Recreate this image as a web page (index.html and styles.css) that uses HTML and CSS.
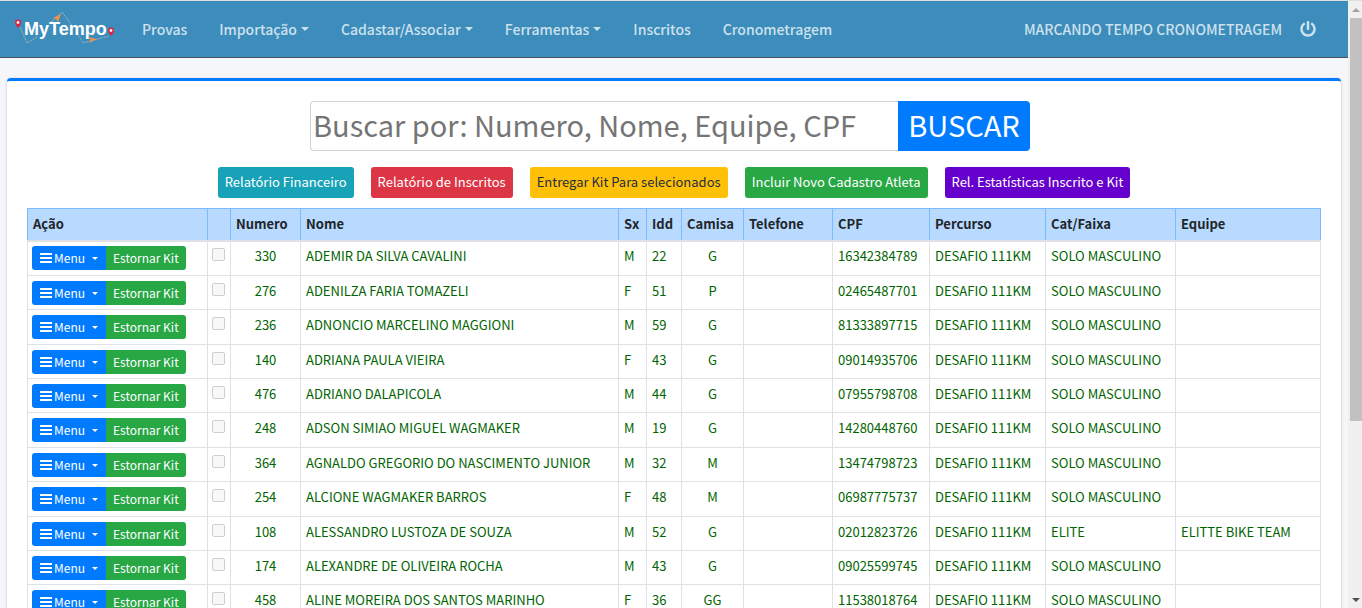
FILE: index.html
```html
<!DOCTYPE html>
<html lang="pt-BR">
<head>
<meta charset="utf-8">
<title>MyTempo - Inscritos</title>
<link rel="stylesheet" href="styles.css">
</head>
<body>
<div class="page">
  <header class="navbar">
    <a class="brand" href="#" aria-label="MyTempo">
      <svg class="logo" viewBox="0 0 100 34" aria-hidden="true">
        <path d="M4 15L11 31L21 25M35 10L46 0L57 15M61 21L67 31L93 24" fill="none" stroke="#a9b4b8" stroke-width="1" stroke-dasharray="2 1"/>
        <path d="M45 2L37 6L40 7L42 10Z M72 25L81 27L73 31L75 28Z" fill="#f0904a"/>
        <text x="8" y="23" class="logo-text">MyTempo</text>
        <path d="M2 16C0 13 -1 12 -1 10.500a3 3 0 0 1 6 0C5 12 4 14 2 16Z M95 24C93 21 92 20 92 18.500a3 3 0 0 1 6 0C98 20 97 22 95 24Z" fill="#e0203c"/>
        <circle cx="2" cy="10.500" r="1.400" fill="#fff"/><circle cx="95" cy="18.500" r="1.400" fill="#fff"/>
      </svg>
    </a>
    <nav class="menu">
      <a href="#">Provas</a>
      <a href="#" class="caret">Importação</a>
      <a href="#" class="caret">Cadastar/Associar</a>
      <a href="#" class="caret">Ferramentas</a>
      <a href="#">Inscritos</a>
      <a href="#">Cronometragem</a>
    </nav>
    <div class="user">
      <a href="#">MARCANDO TEMPO CRONOMETRAGEM</a>
      <a href="#" aria-label="Sair"><svg class="power" viewBox="0 0 512 512" aria-hidden="true"><path fill="currentColor" d="M400 54.100c63 45 104 118.600 104 201.900 0 136.800-110.800 247.700-247.500 248C120 504.300 8.200 393 8 256.400 7.900 173.100 48.900 99.300 111.800 54.200c11.700-8.300 28-4.800 35 7.700L162.600 90c5.900 10.500 3.100 23.800-6.600 31-41.500 30.800-68 79.600-68 134.900-.1 92.300 74.500 168.100 168 168.100 91.600 0 168.600-74.200 168-169.100-.3-51.800-24.700-101.800-68.100-134-9.700-7.200-12.400-20.500-6.500-30.900l15.800-28.100c7-12.400 23.200-16.100 34.800-7.800zM296 264V24c0-13.300-10.700-24-24-24h-32c-13.300 0-24 10.700-24 24v240c0 13.300 10.700 24 24 24h32c13.300 0 24-10.700 24-24z"/></svg></a>
    </div>
  </header>
  <main class="card">
    <form class="search">
      <input type="text" aria-label="Buscar" placeholder="Buscar por: Numero, Nome, Equipe, CPF">
      <button type="button">BUSCAR</button>
    </form>
    <div class="actions">
      <button class="btn teal">Relatório Financeiro</button>
      <button class="btn red">Relatório de Inscritos</button>
      <button class="btn yellow">Entregar Kit Para selecionados</button>
      <button class="btn green">Incluir Novo Cadastro Atleta</button>
      <button class="btn purple">Rel. Estatísticas Inscrito e Kit</button>
    </div>
    <table class="records">
      <colgroup><col class="w-action"><col class="w-check"><col class="w-num"><col><col class="w-sx"><col class="w-idd"><col class="w-camisa"><col class="w-tel"><col class="w-cpf"><col class="w-perc"><col class="w-cat"><col class="w-equipe"></colgroup>
      <thead><tr><th>Ação</th><th></th><th>Numero</th><th>Nome</th><th>Sx</th><th>Idd</th><th>Camisa</th><th>Telefone</th><th>CPF</th><th>Percurso</th><th>Cat/Faixa</th><th>Equipe</th></tr></thead>
      <tbody id="rows"></tbody>
    </table>
  </main>
</div>
<div class="scrollbar" aria-hidden="true"><i class="arrow up"></i><div class="track"><div class="thumb"></div></div><i class="arrow down"></i></div>
<script src="app.js"></script>
</body>
</html>
```
FILE: app.js
```js
const records = [
  [330, "ADEMIR DA SILVA CAVALINI", "M", 22, "G", "16342384789"],
  [276, "ADENILZA FARIA TOMAZELI", "F", 51, "P", "02465487701"],
  [236, "ADNONCIO MARCELINO MAGGIONI", "M", 59, "G", "81333897715"],
  [140, "ADRIANA PAULA VIEIRA", "F", 43, "G", "09014935706"],
  [476, "ADRIANO DALAPICOLA", "M", 44, "G", "07955798708"],
  [248, "ADSON SIMIAO MIGUEL WAGMAKER", "M", 19, "G", "14280448760"],
  [364, "AGNALDO GREGORIO DO NASCIMENTO JUNIOR", "M", 32, "M", "13474798723"],
  [254, "ALCIONE WAGMAKER BARROS", "F", 48, "M", "06987775737"],
  [108, "ALESSANDRO LUSTOZA DE SOUZA", "M", 52, "G", "02012823726", "ELITE", "ELITTE BIKE TEAM"],
  [174, "ALEXANDRE DE OLIVEIRA ROCHA", "M", 43, "G", "09025599745"],
  [458, "ALINE MOREIRA DOS SANTOS MARINHO", "F", 36, "GG", "11538018764"]
];
document.getElementById("rows").innerHTML = records.map(([num, name, sex, age, shirt, cpf, cat = "SOLO MASCULINO", team = ""]) => `
  <tr>
    <td class="action"><div class="group"><button class="menu-btn"><svg viewBox="0 0 12 12" aria-hidden="true"><path d="M0 2h12M0 6h12M0 10h12" stroke="currentColor" stroke-width="2"/></svg><span class="caret">Menu</span></button><button class="kit-btn">Estornar Kit</button></div></td>
    <td class="check"><input type="checkbox" aria-label="Selecionar ${name}"></td>
    <td class="center">${num}</td><td>${name}</td><td>${sex}</td><td>${age}</td><td class="center">${shirt}</td><td></td>
    <td>${cpf}</td><td>DESAFIO 111KM</td><td>${cat}</td><td>${team}</td>
  </tr>`).join("");
```
FILE: styles.css
```css
* { box-sizing: border-box; }
body {
  margin: 0;
  height: 100vh;
  display: flex;
  overflow: hidden;
  border-top: 1px solid #dcdedf;
  background: #f4f6f9;
  color: #212529;
  font: 13px/20px "Noto Sans CJK SC", "Noto Sans", sans-serif;
}
button, input { font: inherit; margin: 0; }
button { border: 0; cursor: pointer; white-space: nowrap; }
.page { flex: 1; min-width: 0; }

.navbar {
  display: flex;
  align-items: center;
  height: 57px;
  padding: 0 32px 0 16px;
  background: #3c8dbc;
  border-bottom: 1px solid #4b545c;
  font-size: 14px;
  font-weight: 500;
}
.navbar a { color: rgba(255, 255, 255, .75); text-decoration: none; white-space: nowrap; }
.brand { width: 100px; margin-right: 26px; }
.logo { display: block; width: 100px; height: 34px; overflow: visible; }
.logo-text { font: bold 18px "Liberation Sans", sans-serif; fill: #fff; }
.menu { display: flex; gap: 32px; flex: 1; }
.user { display: flex; align-items: center; gap: 18px; }
.power { display: block; width: 16px; height: 16px; }
.caret::after {
  content: "";
  display: inline-block;
  margin-left: 4px;
  vertical-align: 4px;
  border: 4px solid transparent;
  border-top-color: currentColor;
  border-bottom: 0;
}

.card {
  margin: 20px 7px 0;
  padding: 20px 20px 0;
  background: #fff;
  border-top: 3px solid #007bff;
  border-radius: 4px;
  box-shadow: 0 0 1px rgba(0, 0, 0, .13), 0 1px 3px rgba(0, 0, 0, .2);
}
.search { display: flex; width: 728px; height: 50px; margin: 0 auto; padding-right: 8px; font-size: 29px; }
.search input {
  flex: 1;
  min-width: 0;
  padding: 0 2px 4px;
  border: 1px solid #ced4da;
  border-right: 0;
  border-radius: 4px 0 0 4px;
}
.search input::placeholder { color: #757575; opacity: 1; }
.search button { width: 132px; padding: 0 0 4px; color: #fff; background: #007bff; border-radius: 0 4px 4px 0; }
.actions { display: flex; justify-content: center; gap: 17px; margin: 16px 0 10px; }
.btn { height: 31px; padding: 0 7px 2px; border-radius: 3px; color: #fff; }
.teal { background: #17a2b8; }
.red { background: #dc3545; }
.yellow { background: #ffc107; color: #1f2d3d; }
.green { background: #28a745; }
.purple { background: #6600cc; }

.records { width: 100%; table-layout: fixed; border-collapse: collapse; }
.records th { height: 32px; padding: 0 5px; text-align: left; background: #b8daff; border: 1px solid #7abaff; border-bottom: 2px solid #dee2e6; }
.records td { height: 34px; padding: 0 5px 4px; color: #006400; border: 1px solid #dee2e6; white-space: nowrap; }
.records tr:nth-child(5n+1) td, .records tr:nth-child(5n+3) td { height: 35px; }
.records .center { text-align: center; }
.records .action { padding: 0 4px; }
.records .check { padding: 0 4px 7px; }
.check input {
  appearance: none;
  display: block;
  width: 13px;
  height: 13px;
  border: 1px solid #cfcfcf;
  border-radius: 2px;
  background: #f8f8f8;
}
.w-action { width: 180px; }
.w-check { width: 23px; }
.w-num { width: 70px; }
.w-sx { width: 28px; }
.w-idd { width: 35px; }
.w-camisa { width: 62px; }
.w-tel { width: 89px; }
.w-cpf { width: 97px; }
.w-perc { width: 116px; }
.w-cat { width: 130px; }
.w-equipe { width: 145px; }
.group { display: flex; font-size: 12px; }
.group button { height: 24px; padding: 0 7px; color: #fff; }
.group .menu-btn { display: flex; align-items: center; gap: 2px; padding: 0 8px; background: #007bff; border-radius: 3px 0 0 3px; }
.group .kit-btn { background: #28a745; border-radius: 0 3px 3px 0; }
.menu-btn svg { width: 12px; height: 12px; }
.menu-btn .caret::after { margin-left: 7px; border-width: 3px 3px 0; vertical-align: 3px; }

.scrollbar { display: flex; flex-direction: column; width: 14px; padding-left: 2px; background: #f0f0f0; }
.track { flex: 1; }
.thumb { height: 403px; max-height: 90%; background: #c1c1c1; }
.arrow { height: 17px; display: grid; place-items: center; }
.arrow::before { content: ""; border: 4px solid transparent; }
.up::before { border-bottom-color: #a3a3a3; border-top: 0; }
.down::before { border-top-color: #505050; border-bottom: 0; }
```
